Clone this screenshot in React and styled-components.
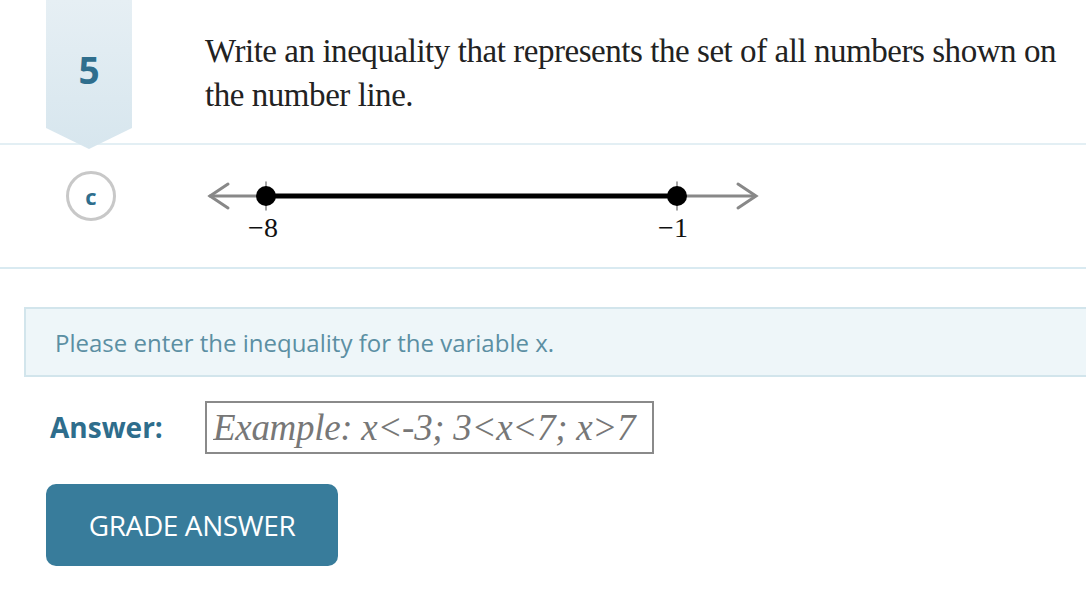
import React from 'react';
import styled, { createGlobalStyle } from 'styled-components';

const Global = createGlobalStyle`
  html, body { margin: 0; padding: 0; background: #fff; }
  body { font-family: 'Open Sans', 'Noto Sans', sans-serif; }
`;

const Page = styled.div`
  width: 1086px;
  height: 610px;
  overflow: hidden;
  position: relative;
`;

const QuestionRow = styled.div`
  display: flex;
  height: 143px;
  border-bottom: 2px solid #e3eff4;
`;

const RibbonCol = styled.div`
  width: 132px;
  flex-shrink: 0;
  position: relative;
`;

const Ribbon = styled.div`
  position: absolute;
  top: 0;
  left: 46px;
  width: 86px;
  height: 149px;
  background: linear-gradient(#e6eff4, #d7e6ee);
  clip-path: polygon(0 0, 100% 0, 100% 128px, 50% 100%, 0 128px);
  display: flex;
  justify-content: center;
  padding-top: 45px;
  box-sizing: border-box;
  font-weight: 700;
  font-size: 37px;
  line-height: 50px;
  color: #2f6e8d;
  z-index: 1;
`;

const Prompt = styled.p`
  margin: 0;
  width: 858px;
  padding: 29px 0 0 73px;
  font-family: 'Liberation Serif', 'Times New Roman', serif;
  font-size: 33px;
  line-height: 44px;
  color: #222;
  letter-spacing: -0.45px;
`;

const PartRow = styled.div`
  display: flex;
  align-items: center;
  height: 122px;
  border-bottom: 2px solid #d9eaf1;
`;

const PartBadge = styled.div`
  width: 50px;
  height: 50px;
  margin-left: 66px;
  margin-top: -20px;
  border: 3px solid #c8c8c8;
  border-radius: 50%;
  display: flex;
  align-items: center;
  justify-content: center;
  font-weight: 700;
  font-size: 22px;
  color: #2f6e8d;
  box-sizing: border-box;
  flex-shrink: 0;
`;

const Graph = styled.svg`
  margin-left: 92px;
  margin-top: 12px;
  overflow: visible;
`;

const Hint = styled.div`
  margin: 38px 0 0 24px;
  height: 70px;
  border: 2px solid #d2e5ec;
  border-right: none;
  background: #eef6f9;
  display: flex;
  align-items: center;
  padding-left: 29px;
  font-size: 24px;
  color: #5b8fa3;
  box-sizing: border-box;
`;

const AnswerRow = styled.div`
  display: flex;
  align-items: center;
  margin: 24px 0 0 50px;
`;

const AnswerLabel = styled.span`
  font-weight: 700;
  font-size: 28px;
  color: #2e6d8c;
  width: 155px;
  margin-top: -2px;
`;

const AnswerInput = styled.input`
  width: 449px;
  height: 53px;
  box-sizing: border-box;
  border: 2px solid #8a8a8a;
  padding: 0 6px;
  font-family: 'Liberation Serif', 'Times New Roman', serif;
  font-style: italic;
  font-size: 37px;
  letter-spacing: -0.3px;
  outline: none;
  &::placeholder { color: #777; }
`;

const GradeButton = styled.button`
  margin: 30px 0 0 46px;
  width: 292px;
  height: 82px;
  border: none;
  border-radius: 10px;
  background: #387c9b;
  color: #fff;
  font-family: 'Open Sans', sans-serif;
  font-size: 28px;
  letter-spacing: -0.4px;
`;

const NumberLine = () => (
  <Graph width="560" height="80" viewBox="0 0 560 80">
    <g stroke="#888" strokeWidth="3" fill="none" strokeLinecap="round">
      <line x1="2" y1="24" x2="546" y2="24" />
      <polyline points="20,12 2,24 20,36" />
      <polyline points="530,12 548,24 530,36" />
      <line x1="58" y1="10" x2="58" y2="38" strokeWidth="1.5" />
      <line x1="469" y1="10" x2="469" y2="38" strokeWidth="1.5" />
    </g>
    <line x1="58" y1="24" x2="469" y2="24" stroke="#000" strokeWidth="5" />
    <circle cx="58" cy="24" r="10" fill="#000" />
    <circle cx="469" cy="24" r="10" fill="#000" />
    <g fontFamily="'Liberation Serif', serif" fontSize="28" fill="#111" textAnchor="middle">
      <text x="55" y="65">−8</text>
      <text x="465" y="65">−1</text>
    </g>
  </Graph>
);

export default function App() {
  return (
    <Page>
      <Global />
      <QuestionRow>
        <RibbonCol>
          <Ribbon>5</Ribbon>
        </RibbonCol>
        <Prompt>Write an inequality that represents the set of all numbers shown on the number line.</Prompt>
      </QuestionRow>
      <PartRow>
        <PartBadge>c</PartBadge>
        <NumberLine />
      </PartRow>
      <Hint>Please enter the inequality for the variable x.</Hint>
      <AnswerRow>
        <AnswerLabel>Answer:</AnswerLabel>
        <AnswerInput placeholder="Example: x<-3; 3<x<7; x>7" />
      </AnswerRow>
      <GradeButton>GRADE ANSWER</GradeButton>
    </Page>
  );
}
